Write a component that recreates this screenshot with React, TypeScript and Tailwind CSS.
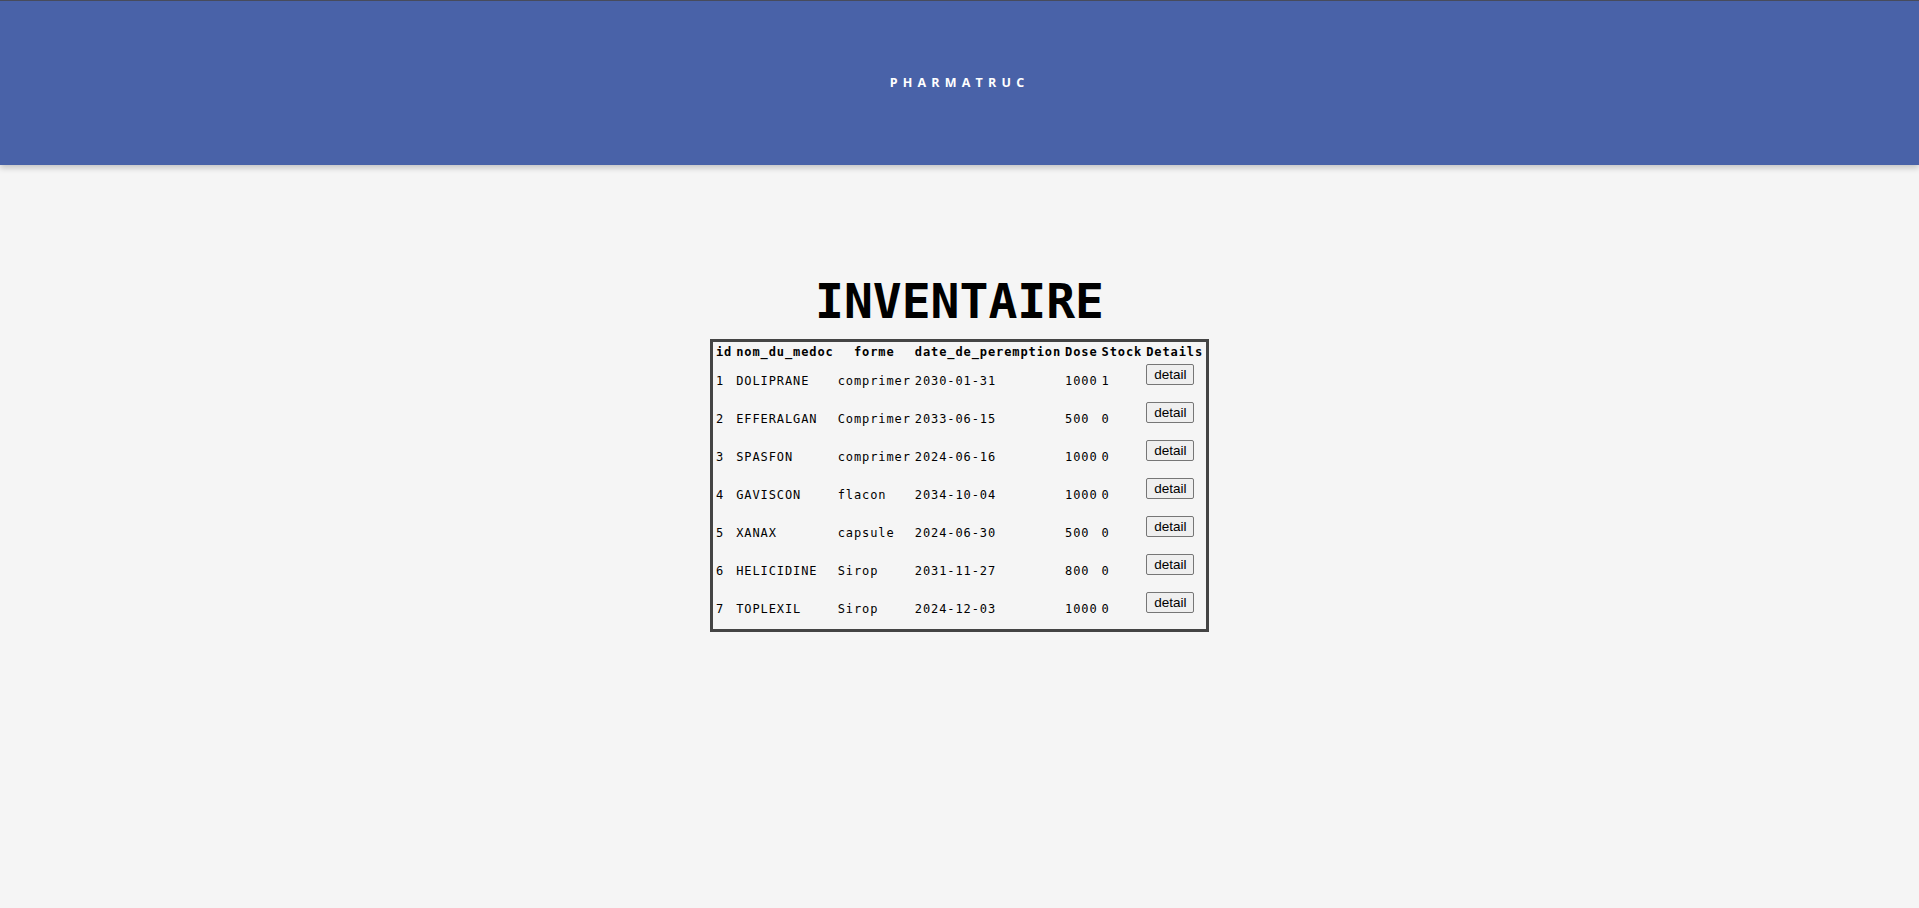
const medocs = [
    { id: 1, nom: "DOLIPRANE", forme: "comprimer", date: "2030-01-31", dose: 1000, stock: 1 },
    { id: 2, nom: "EFFERALGAN", forme: "Comprimer", date: "2033-06-15", dose: 500, stock: 0 },
    { id: 3, nom: "SPASFON", forme: "comprimer", date: "2024-06-16", dose: 1000, stock: 0 },
    { id: 4, nom: "GAVISCON", forme: "flacon", date: "2034-10-04", dose: 1000, stock: 0 },
    { id: 5, nom: "XANAX", forme: "capsule", date: "2024-06-30", dose: 500, stock: 0 },
    { id: 6, nom: "HELICIDINE", forme: "Sirop", date: "2031-11-27", dose: 800, stock: 0 },
    { id: 7, nom: "TOPLEXIL", forme: "Sirop", date: "2024-12-03", dose: 1000, stock: 0 },
];

const headers = ["id", "nom_du_medoc", "forme", "date_de_peremption", "Dose", "Stock", "Details"];

function Header() {
    return (
        <header className="h-[165px] w-full bg-[#4962a8] border-t border-[#474b5c] shadow-[0_3px_6px_rgba(0,0,0,0.2)] flex justify-center items-center">
            <h2 className="text-white text-[12.5px] font-bold tracking-[5.2px] font-['Open_Sans',sans-serif]">
                PHARMATRUC
            </h2>
        </header>
    );
}

function Row(props: { m: (typeof medocs)[number] }) {
    const m = props.m;
    return (
        <tr>
            <td className="p-px h-[36px] align-middle">{m.id}</td>
            <td className="p-px align-middle">{m.nom}</td>
            <td className="p-px align-middle">{m.forme}</td>
            <td className="p-px align-middle">{m.date}</td>
            <td className="p-px align-middle">{m.dose}</td>
            <td className="p-px align-middle">{m.stock}</td>
            <td className="p-px align-top text-left">
                <button className="h-[21px] px-[7px] border border-[#767676] bg-[#efefef] rounded-[2px] text-[13.5px] leading-none tracking-normal text-black font-['Liberation_Sans',Arial,sans-serif]">
                    detail
                </button>
            </td>
        </tr>
    );
}

export default function App() {
    return (
        <div className="min-h-[908px] bg-[#f5f5f5] flex flex-col">
            <Header />
            <main className="flex flex-col items-center pt-[108px] font-['DejaVu_Sans_Mono',monospace] text-black">
                <h1 className="text-[48px] leading-[56px] font-bold">INVENTAIRE</h1>
                <table className="mt-[10px] border-[3px] border-[#444444] border-separate border-spacing-[2px] text-[12px] leading-[15px] tracking-[0.9px]">
                    <thead>
                        <tr>
                            {headers.map((h) => (
                                <th key={h} className="p-px font-bold text-center">
                                    {h}
                                </th>
                            ))}
                        </tr>
                    </thead>
                    <tbody>
                        {medocs.map((m) => (
                            <Row key={m.id} m={m} />
                        ))}
                    </tbody>
                </table>
            </main>
        </div>
    );
}
